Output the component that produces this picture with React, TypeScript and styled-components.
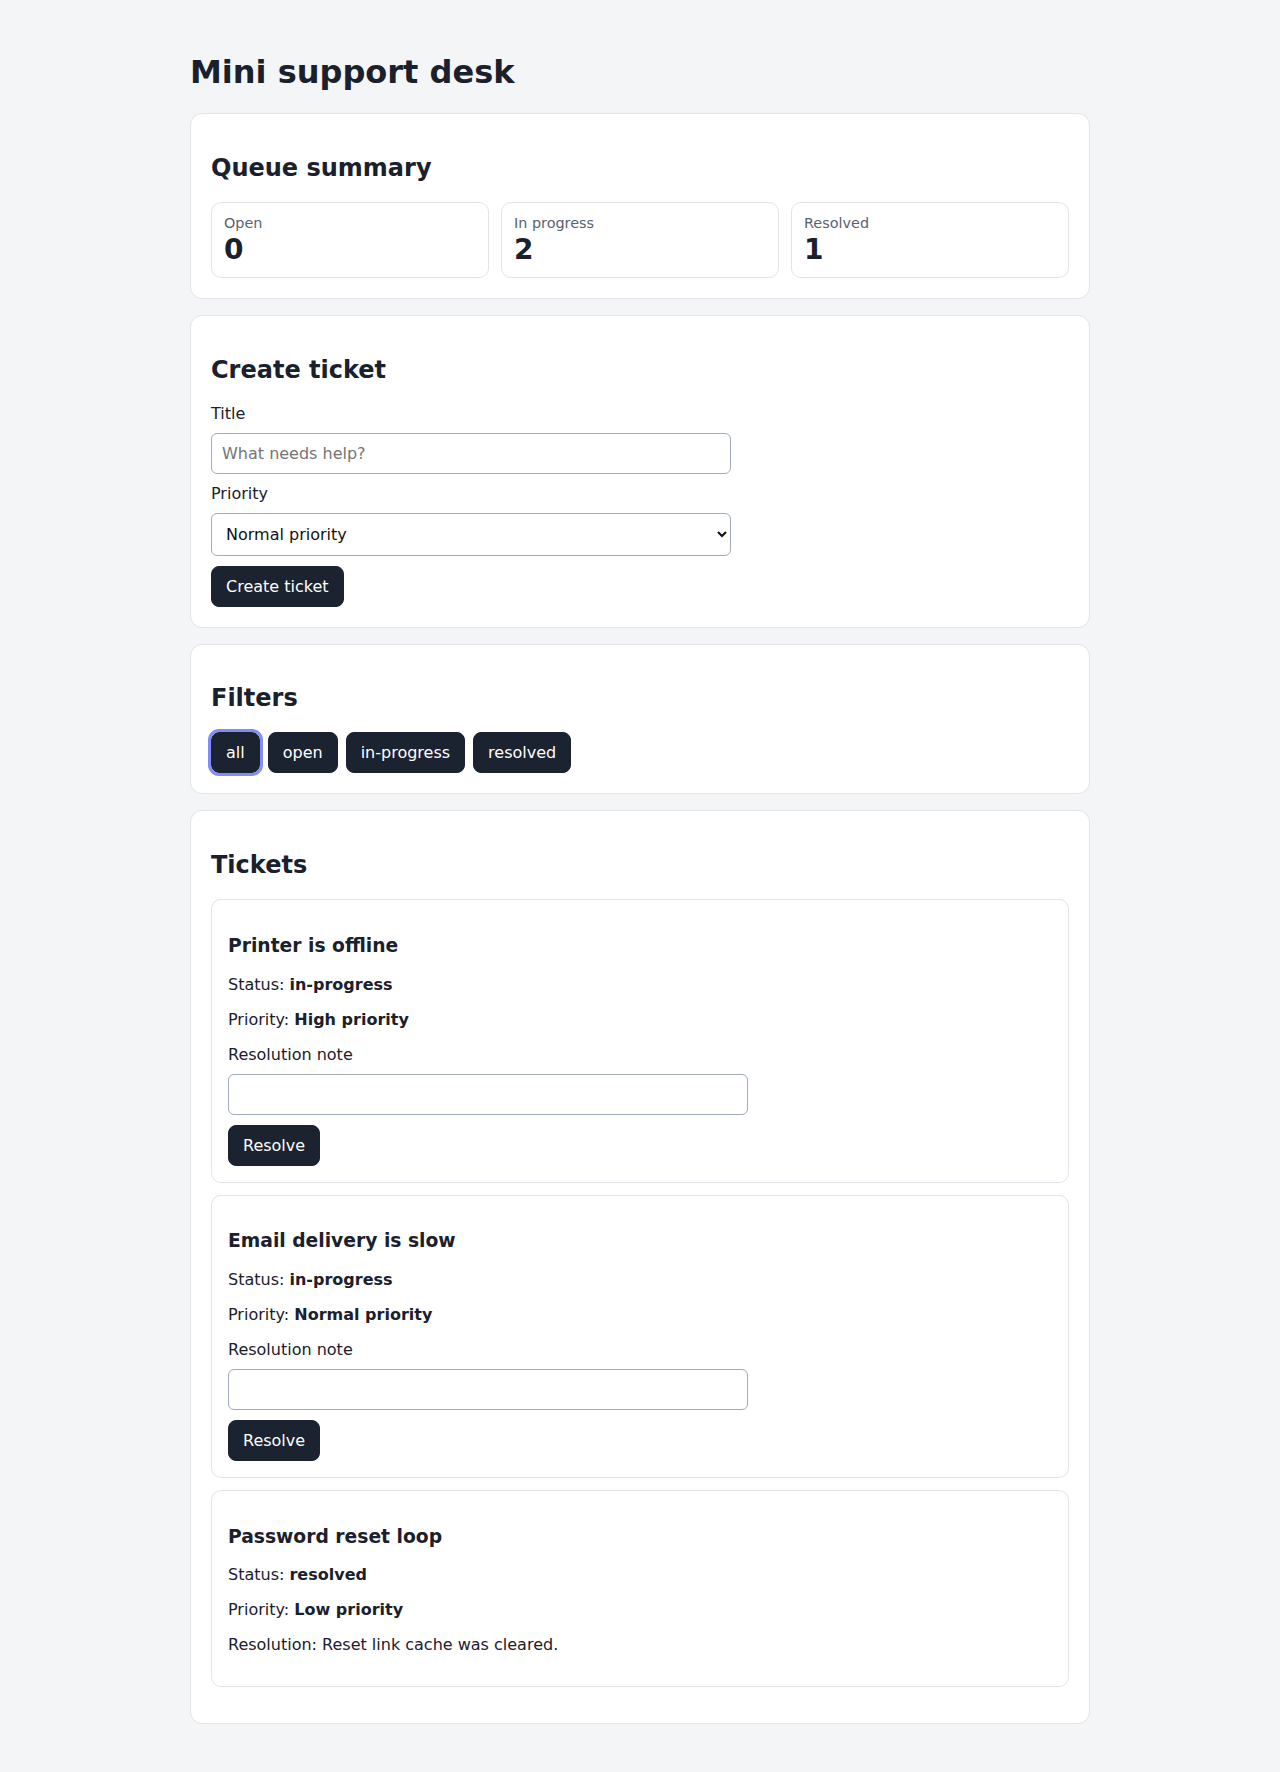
import React, * as react from "react";
import styled, { createGlobalStyle } from "styled-components";

type Status = "open" | "in-progress" | "resolved";

interface Ticket {
  id: number;
  title: string;
  status: Status;
  priority: string;
  resolution?: string;
}

const initialTickets: Ticket[] = [
  { id: 1, title: "Printer is offline", status: "in-progress", priority: "High priority" },
  { id: 2, title: "Email delivery is slow", status: "in-progress", priority: "Normal priority" },
  {
    id: 3,
    title: "Password reset loop",
    status: "resolved",
    priority: "Low priority",
    resolution: "Reset link cache was cleared.",
  },
];

const filters = ["all", "open", "in-progress", "resolved"];

const App: React.FC = () => {
  const [tickets, setTickets] = react.useState<Ticket[]>(initialTickets);
  const [filter, setFilter] = react.useState("all");
  const [title, setTitle] = react.useState("");
  const [priority, setPriority] = react.useState("Normal priority");
  const [notes, setNotes] = react.useState<Record<number, string>>({});

  const count = (s: Status) => tickets.filter((t) => t.status === s).length;
  const visible = tickets.filter((t) => filter === "all" || t.status === filter);

  const handleCreate = (e: React.FormEvent) => {
    e.preventDefault();
    if (!title.trim()) return;
    setTickets((prev) => [
      ...prev,
      { id: Date.now(), title: title.trim(), status: "open", priority },
    ]);
    setTitle("");
  };

  const resolve = (id: number) => {
    setTickets((prev) =>
      prev.map((t) =>
        t.id === id ? { ...t, status: "resolved", resolution: notes[id] || "" } : t
      )
    );
  };

  return (
    <Page>
      <GlobalStyle />
      <Main>
        <PageTitle>Mini support desk</PageTitle>

        <Card>
          <CardTitle>Queue summary</CardTitle>
          <StatGrid>
            <StatBox>
              <StatLabel>Open</StatLabel>
              <StatValue>{count("open")}</StatValue>
            </StatBox>
            <StatBox>
              <StatLabel>In progress</StatLabel>
              <StatValue>{count("in-progress")}</StatValue>
            </StatBox>
            <StatBox>
              <StatLabel>Resolved</StatLabel>
              <StatValue>{count("resolved")}</StatValue>
            </StatBox>
          </StatGrid>
        </Card>

        <Card>
          <CardTitle>Create ticket</CardTitle>
          <Form onSubmit={handleCreate}>
            <Label htmlFor="title">Title</Label>
            <TextInput
              id="title"
              placeholder="What needs help?"
              value={title}
              onChange={(e) => setTitle(e.target.value)}
            />
            <Label htmlFor="priority">Priority</Label>
            <Select
              id="priority"
              value={priority}
              onChange={(e) => setPriority(e.target.value)}
            >
              <option>Low priority</option>
              <option>Normal priority</option>
              <option>High priority</option>
            </Select>
            <Button type="submit">Create ticket</Button>
          </Form>
        </Card>

        <Card>
          <CardTitle>Filters</CardTitle>
          <FilterRow>
            {filters.map((f) => (
              <Button key={f} $active={filter === f} onClick={() => setFilter(f)}>
                {f}
              </Button>
            ))}
          </FilterRow>
        </Card>

        <Card>
          <CardTitle>Tickets</CardTitle>
          <TicketList>
            {visible.map((t) => (
              <TicketCard key={t.id}>
                <TicketTitle>{t.title}</TicketTitle>
                <Meta>
                  Status: <strong>{t.status}</strong>
                </Meta>
                <Meta>
                  Priority: <strong>{t.priority}</strong>
                </Meta>
                {t.status === "resolved" ? (
                  <Meta>Resolution: {t.resolution}</Meta>
                ) : (
                  <Form as="div">
                    <Label htmlFor={`note-${t.id}`}>Resolution note</Label>
                    <TextInput
                      id={`note-${t.id}`}
                      value={notes[t.id] || ""}
                      onChange={(e) =>
                        setNotes((prev) => ({ ...prev, [t.id]: e.target.value }))
                      }
                    />
                    <Button type="button" onClick={() => resolve(t.id)}>
                      Resolve
                    </Button>
                  </Form>
                )}
              </TicketCard>
            ))}
          </TicketList>
        </Card>
      </Main>
    </Page>
  );
};

const GlobalStyle = createGlobalStyle`
  html, body {
    margin: 0;
    background: #f4f5f7;
  }
  body {
    font-family: "DejaVu Sans", sans-serif;
    color: #1a202c;
  }
`;

const Page = styled.div`
  padding: 32px 24px 40px;
`;

const Main = styled.main`
  max-width: 900px;
  margin: 0 auto;
`;

const PageTitle = styled.h1`
  font-size: 32px;
  font-weight: 700;
  margin: 21px 0 22px;
`;

const Card = styled.section`
  background: #ffffff;
  border: 1px solid #e2e4e9;
  border-radius: 12px;
  padding: 20px;
  margin-bottom: 16px;
`;

const CardTitle = styled.h2`
  font-size: 24px;
  font-weight: 700;
  margin: 19.92px 0;
`;

const StatGrid = styled.div`
  display: grid;
  grid-template-columns: repeat(3, 1fr);
  gap: 12px;
`;

const StatBox = styled.div`
  border: 1px solid #e2e4e9;
  border-radius: 10px;
  padding: 12px;
`;

const StatLabel = styled.div`
  font-size: 14.4px;
  color: #5a6270;
`;

const StatValue = styled.div`
  margin-top: 4.5px;
  font-size: 28px;
  font-weight: 700;
  line-height: 1.05;
`;

const Form = styled.form`
  display: flex;
  flex-direction: column;
  align-items: flex-start;
  gap: 10px;
`;

const Label = styled.label`
  font-size: 16px;
`;

const TextInput = styled.input`
  width: 100%;
  max-width: 520px;
  box-sizing: border-box;
  padding: 10px;
  border: 1px solid #a3acba;
  border-radius: 6px;
  font: inherit;
  font-size: 16px;
  color: #1a202c;
  background: #ffffff;

  &::placeholder {
    color: #757575;
  }
`;

const Select = styled.select`
  width: 100%;
  max-width: 520px;
  box-sizing: border-box;
  padding: 10px;
  border: 1px solid #a3acba;
  border-radius: 6px;
  font: inherit;
  font-size: 16px;
  color: #111111;
  background: #ffffff;
`;

const Button = styled.button<{ $active?: boolean }>`
  padding: 10px 14px;
  border: 1px solid #1b2230;
  border-radius: 8px;
  background: #1b2230;
  color: #ffffff;
  font: inherit;
  font-size: 16px;
  cursor: pointer;
  outline: ${(p) => (p.$active ? "3px solid #818cf8" : "none")};
`;

const FilterRow = styled.div`
  display: flex;
  flex-wrap: wrap;
  gap: 8px;
`;

const TicketList = styled.div`
  display: flex;
  flex-direction: column;
  gap: 12px;
  margin: 16px 0;
`;

const TicketCard = styled.article`
  border: 1px solid #e2e4e9;
  border-radius: 10px;
  padding: 16px;
`;

const TicketTitle = styled.h3`
  font-size: 18.72px;
  font-weight: 700;
  margin: 18.72px 0;
`;

const Meta = styled.p`
  margin: 16px 0;
  font-size: 16px;
`;

export default App;
